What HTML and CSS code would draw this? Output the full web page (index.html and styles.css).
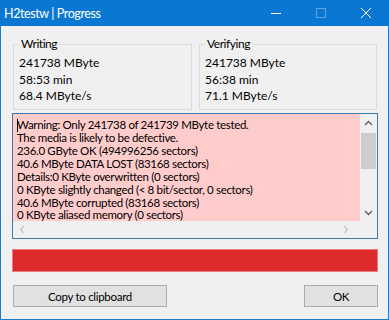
FILE: index.html
```html
<!DOCTYPE html>
<html>
<head>
<meta charset="utf-8">
<link rel="stylesheet" href="styles.css">
</head>
<body>
<div class="window">
  <div class="titlebar">
    <span class="title">H2testw | Progress</span>
    <div class="controls">
      <span class="ctl"><svg width="10" height="10" viewBox="0 0 10 10"><path d="M0 5.5h10" stroke="#fff" stroke-width="1"/></svg></span>
      <span class="ctl"><svg width="10" height="10" viewBox="0 0 10 10"><rect x="0.5" y="0.5" width="9" height="9" fill="none" stroke="#5ea5e3" stroke-width="1"/></svg></span>
      <span class="ctl"><svg width="10" height="10" viewBox="0 0 10 10"><path d="M0 0L10 10M10 0L0 10" stroke="#fff" stroke-width="1"/></svg></span>
    </div>
  </div>
  <div class="content">
    <div class="groups">
      <fieldset class="group">
        <legend>Writing</legend>
        <div class="line">241738 MByte</div>
        <div class="line">58:53 min</div>
        <div class="line">68.4 MByte/s</div>
      </fieldset>
      <fieldset class="group">
        <legend>Verifying</legend>
        <div class="line">241738 MByte</div>
        <div class="line">56:38 min</div>
        <div class="line">71.1 MByte/s</div>
      </fieldset>
    </div>
    <div class="log">
      <div class="log-text">
        <div><span class="caret"></span>Warning: Only 241738 of 241739 MByte tested.</div>
        <div>The media is likely to be defective.</div>
        <div>236.0 GByte OK (494996256 sectors)</div>
        <div>40.6 MByte DATA LOST (83168 sectors)</div>
        <div>Details:0 KByte overwritten (0 sectors)</div>
        <div>0 KByte slightly changed (&lt; 8 bit/sector, 0 sectors)</div>
        <div>40.6 MByte corrupted (83168 sectors)</div>
        <div>0 KByte aliased memory (0 sectors)</div>
      </div>
      <div class="vscroll">
        <div class="arrow-box"><svg width="9" height="6" viewBox="0 0 9 6"><path d="M1 5L4.5 1.5L8 5" fill="none" stroke="#606060" stroke-width="1.4"/></svg></div>
        <div class="thumb-track"><div class="thumb"></div></div>
        <div class="arrow-box"><svg width="9" height="6" viewBox="0 0 9 6"><path d="M1 1L4.5 4.5L8 1" fill="none" stroke="#606060" stroke-width="1.4"/></svg></div>
      </div>
      <div class="hscroll">
        <svg width="6" height="9" viewBox="0 0 6 9"><path d="M5 1L1.5 4.5L5 8" fill="none" stroke="#c6c6c6" stroke-width="1.4"/></svg>
        <svg width="6" height="9" viewBox="0 0 6 9"><path d="M1 1L4.5 4.5L1 8" fill="none" stroke="#c6c6c6" stroke-width="1.4"/></svg>
      </div>
      <div class="corner"></div>
    </div>
    <div class="progress"></div>
    <div class="buttons">
      <button class="btn btn-copy">Copy to clipboard</button>
      <button class="btn btn-ok">OK</button>
    </div>
  </div>
</div>
</body>
</html>
```

FILE: styles.css
```css
* { box-sizing: border-box; }
html, body { margin: 0; padding: 0; background: #fff; }
body {
  font-family: Lato, "Noto Sans", sans-serif;
  font-size: 12px;
  color: #000;
}
.window {
  width: 389px;
  height: 320px;
  background: #f0f0f0;
  border: 1px solid #1a7ccf;
  border-top: none;
  display: flex;
  flex-direction: column;
}
.titlebar {
  height: 26px;
  background: #0a78d2;
  margin: 0 -1px;
  display: flex;
  align-items: center;
  justify-content: space-between;
  color: #fff;
}
.title {
  padding-left: 4px;
  font-size: 12.5px;
  letter-spacing: -0.4px;
}
.controls {
  display: flex;
  height: 100%;
  padding-right: 1px;
}
.ctl {
  width: 45px;
  display: flex;
  align-items: center;
  justify-content: center;
}
.content {
  flex: 1;
  display: flex;
  flex-direction: column;
  padding: 10px 10px 0 11px;
}
.groups {
  display: flex;
  gap: 7px;
  padding-left: 1px;
}
.group {
  margin: 0;
  border: 1px solid #dcdcdc;
  padding: 3px 0 6px 5px;
  height: 74px;
  min-width: 0;
}
.group:first-child { width: 179px; }
.group:last-child { width: 178px; }
.group legend {
  padding: 0 2px;
  margin-left: 0;
  line-height: 16px;
  font-size: 12px;
  letter-spacing: -0.45px;
  color: #000;
}
.line {
  line-height: 16.5px;
  font-size: 12px;
  white-space: nowrap;
}
.log {
  margin-top: 3px;
  width: 366px;
  height: 126px;
  border: 1px solid #3f78aa;
  display: grid;
  grid-template-columns: 1fr 17px;
  grid-template-rows: 1fr 17px;
  background: #f0f0f0;
}
.log-text {
  background: #ffcccc;
  padding: 5px 0 0 4px;
  font-size: 11.5px;
  letter-spacing: -0.33px;
  line-height: 12.9px;
  white-space: nowrap;
  overflow: hidden;
}
.caret {
  display: inline-block;
  width: 1px;
  height: 13px;
  background: #000;
  vertical-align: top;
  margin-right: -1px;
}
.vscroll {
  background: #f0f0f0;
  display: flex;
  flex-direction: column;
  align-items: center;
}
.arrow-box {
  height: 17px;
  width: 100%;
  display: flex;
  align-items: center;
  justify-content: center;
}
.thumb-track {
  flex: 1;
  width: 100%;
  display: flex;
  justify-content: center;
}
.thumb {
  width: 15px;
  height: 36px;
  background: #cdcdcd;
  margin-top: 2px;
}
.hscroll {
  background: #f0f0f0;
  display: flex;
  align-items: center;
  justify-content: space-between;
  padding: 0 11px 0 6px;
}
.corner { background: #f0f0f0; }
.progress {
  margin-top: 10px;
  width: 366px;
  height: 23px;
  background: #dd2a2b;
  border: 1px solid #e87c7c;
}
.buttons {
  margin-top: 13px;
  display: flex;
  justify-content: space-between;
  width: 366px;
}
.btn {
  height: 22px;
  background: #e1e1e1;
  border: 1px solid #adadad;
  font-family: Lato, "Noto Sans", sans-serif;
  font-size: 11.5px;
  letter-spacing: -0.3px;
  color: #000;
  padding: 0;
  border-radius: 0;
}
.btn-copy { width: 154px; margin-left: 1px; }
.btn-ok { width: 74px; }
```
